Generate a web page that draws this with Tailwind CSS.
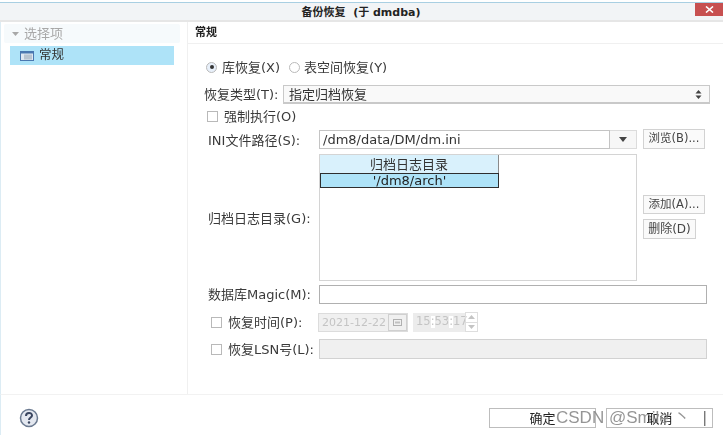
<!DOCTYPE html>
<html lang="zh">
<head>
<meta charset="utf-8">
<script src="https://cdn.jsdelivr.net/npm/@tailwindcss/browser@4"></script>
</head>
<body class="m-0 bg-white">
<div class="relative w-[723px] h-[435px] overflow-hidden bg-white flex flex-col text-[13px] leading-none text-[#3a3a3a] font-['DejaVu_Sans','Noto_Sans_CJK_SC',sans-serif]">
  <div class="flex flex-col flex-1 min-h-0 blur-[0.35px]">
    <!-- title bar -->
    <div class="mt-[2px] h-[20px] shrink-0 border-t border-t-[#a9cfe2] border-b-2 border-b-[#e6e6e6] bg-[#f2f4f6] flex justify-center items-center relative">
      <span class="font-bold text-[#222] text-[11px] ml-[-1px] mt-[1px] whitespace-pre">备份恢复  (于 dmdba)</span>
      <div class="absolute right-0 top-0 w-[28px] h-[13px] bg-[#c75050] flex items-center justify-center">
        <svg width="9" height="7" viewBox="0 0 9 7"><path d="M1 .5 8 6.500M8 .5 1 6.500" stroke="#fff" stroke-width="1.600"/></svg>
      </div>
    </div>
    <div class="flex flex-1 min-h-0 border-l border-l-[#dcecf4]">
      <!-- sidebar -->
      <div class="w-[187px] shrink-0 border-r border-r-[#f0f0f0] pl-[3px] pt-[2px]">
        <div class="w-[176px] h-[19px] bg-[#f6fafc] flex items-center pl-[8px] gap-[5px] text-[#a8a8a8] text-[13px] rounded-[2px]">
          <svg width="7" height="4" viewBox="0 0 7 4"><path d="M0 0h7L3.500 4z" fill="#a8a8a8"/></svg>
          <span>选择项</span>
        </div>
        <div class="mt-[3px] ml-[6px] w-[164px] h-[19px] bg-[#aee3f8] flex items-center pl-[10px] gap-[5px] text-[12.5px] text-[#333]">
          <svg width="14" height="10" viewBox="0 0 14 10"><rect x=".5" y=".5" width="13" height="9" fill="#dfe8f2" stroke="#4a78b0"/><rect x="1" y="1" width="12" height="1.500" fill="#4a78b0"/><rect x="4" y="3.500" width="8" height="5" fill="#b8c4d0"/></svg>
          <span>常规</span>
        </div>
      </div>
      <!-- main -->
      <div class="flex-1 min-w-0 flex flex-col">
        <div class="h-[22px] shrink-0 border-b border-b-[#f0f0f0] pl-[7px] pt-[5px] font-bold text-[#222] text-[11px]">常规</div>
        <div class="relative flex-1 flex flex-col">
          <!-- radios -->
          <div class="flex items-center h-[14px] mt-[16px] ml-[18px]">
            <span class="w-[11px] h-[11px] rounded-full border border-[#b9b9b9] bg-[#e8f0fa] flex items-center justify-center"><span class="w-[4px] h-[4px] rounded-full bg-[#333]"></span></span>
            <span class="ml-[5px] whitespace-nowrap">库恢复(X)</span>
            <span class="ml-[9px] w-[11px] h-[11px] rounded-full border border-[#b9b9b9] bg-white"></span>
            <span class="ml-[4px] whitespace-nowrap">表空间恢复(Y)</span>
          </div>
          <!-- select -->
          <div class="flex items-center mt-[11px] h-[19px] ml-[16px]">
            <span class="w-[79px] whitespace-nowrap">恢复类型(T):</span>
            <div class="w-[427px] h-[19px] border border-[#c9c9c9] border-b-2 bg-[#f9f9f9] flex items-center justify-between pl-[5px] pr-[7px]">
              <span class="text-[#333]">指定归档恢复</span>
              <svg width="7" height="11" viewBox="0 0 7 11"><path d="M3.500 1 6.500 4.500H.5zM3.500 10 .5 6.500h6z" fill="#444"/></svg>
            </div>
          </div>
          <!-- force -->
          <div class="flex items-center mt-[5px] h-[14px] ml-[19px]">
            <span class="w-[11px] h-[11px] border border-[#b9b9b9] bg-white"></span>
            <span class="ml-[6px] whitespace-nowrap">强制执行(O)</span>
          </div>
          <!-- ini -->
          <div class="flex mt-[7px] ml-[20px] h-[20px]">
            <span class="w-[111px] mt-[4px] whitespace-nowrap">INI文件路径(S):</span>
            <div class="w-[291px] h-[19px] border border-[#c4c4c4] bg-white flex items-center pl-[3px] text-[#333]">/dm8/data/DM/dm.ini</div>
            <div class="w-[27px] h-[19px] border border-l-0 border-[#dcdcdc] bg-[#f7f7f7] flex items-center justify-center">
              <svg width="8" height="5" viewBox="0 0 8 5"><path d="M0 0h8L4 5z" fill="#444"/></svg>
            </div>
            <button class="ml-[6px] -mt-[1px] w-[62px] h-[20px] border border-[#d2d2d2] bg-[#fafafa] text-[#444] text-[11.5px] whitespace-nowrap">浏览(B)...</button>
          </div>
          <!-- table -->
          <div class="flex mt-[4px] ml-[20px] h-[127px]">
            <span class="w-[111px] mt-[58px] whitespace-nowrap">归档日志目录(G):</span>
            <div class="w-[318px] h-[127px] border border-[#d4d4d4] bg-white">
              <div class="w-[179px] h-[18px] bg-[#d9f1fc] border-r border-r-[#8a8a8a] flex items-center justify-center text-[#333]">归档日志目录</div>
              <div class="w-[179px] h-[15px] bg-[#aee3f8] border border-[#2e2e2e] flex items-center justify-center text-[#222]">'/dm8/arch'</div>
            </div>
            <div class="ml-[6px] flex flex-col items-start">
              <button class="mt-[41px] w-[62px] h-[19px] border border-[#d2d2d2] bg-[#fafafa] text-[#444] text-[11.5px] whitespace-nowrap">添加(A)...</button>
              <button class="mt-[5px] w-[53px] h-[20px] border border-[#d2d2d2] bg-[#fafafa] text-[#444] text-[12px] whitespace-nowrap">删除(D)</button>
            </div>
          </div>
          <!-- magic -->
          <div class="flex items-center mt-[4px] ml-[20px] h-[19px]">
            <span class="w-[111px] whitespace-nowrap">数据库Magic(M):</span>
            <div class="w-[388px] h-[19px] border border-[#b0b0b0] bg-white"></div>
          </div>
          <!-- time -->
          <div class="flex items-center mt-[8px] ml-[23px] h-[20px]">
            <span class="w-[11px] h-[11px] border border-[#b9b9b9] bg-white"></span>
            <span class="ml-[6px] w-[90px] whitespace-nowrap">恢复时间(P):</span>
            <div class="w-[90px] h-[19px] border border-[#dcdcdc] bg-[#f0f0f0] flex items-center pl-[3px] justify-between text-[#c4c4c4] text-[11px] whitespace-nowrap">
              <span>2021-12-22</span>
              <span class="w-[19px] h-[17px] border border-[#d0d0d0] flex items-center justify-center"><svg width="9" height="7" viewBox="0 0 9 7"><rect x=".5" y=".5" width="8" height="6" fill="none" stroke="#b0b0b0"/><rect x="2" y="2.500" width="5" height="2" fill="#c0c0c0"/></svg></span>
            </div>
            <div class="ml-[5px] w-[52px] h-[19px] bg-[#ececec] flex items-center pl-[3px] text-[#c4c4c4] text-[11.5px]">15<span class="bg-white">:</span>53<span class="bg-white">:</span>17</div>
            <div class="w-[13px] h-[20px] flex flex-col border border-[#dedede]">
              <span class="flex-1 flex items-center justify-center border-b border-b-[#dedede]"><svg width="7" height="4" viewBox="0 0 7 4"><path d="M3.500 0 7 4H0z" fill="#c4c4c4"/></svg></span>
              <span class="flex-1 flex items-center justify-center"><svg width="7" height="4" viewBox="0 0 7 4"><path d="M0 0h7L3.500 4z" fill="#c4c4c4"/></svg></span>
            </div>
          </div>
          <!-- lsn -->
          <div class="flex items-center mt-[7px] ml-[23px] h-[20px]">
            <span class="w-[11px] h-[11px] border border-[#b9b9b9] bg-white"></span>
            <span class="ml-[6px] w-[91px] whitespace-nowrap">恢复LSN号(L):</span>
            <div class="w-[388px] h-[20px] border border-[#d2d2d2] bg-[#f0f0f0]"></div>
          </div>
        </div>
      </div>
    </div>
    <!-- footer -->
    <div class="h-[41px] shrink-0 border-t border-t-[#f2f2f2] border-l border-l-[#dcecf4] flex items-center pl-[18px] pr-[10px]">
      <svg width="20" height="20" viewBox="0 0 20 20" class="mt-[6px]">
        <circle cx="10" cy="10" r="8.500" fill="#e4e8f0" stroke="#6b7a90" stroke-width="1.500"/>
        <path d="M7 8c0-4 6-4 6-.5 0 2-3 2-3 4.500" fill="none" stroke="#3a4660" stroke-width="2"/>
        <circle cx="10" cy="14.500" r="1.200" fill="#3a4660"/>
      </svg>
      <div class="ml-auto flex gap-[10px] mt-[6px]">
        <button class="w-[107px] h-[20px] border border-[#bdbdbd] bg-white text-[#222] text-[13px]">确定</button>
        <button class="w-[107px] h-[20px] border border-[#bdbdbd] bg-white text-[#222] text-[13px]">取消</button>
      </div>
    </div>
  </div>
  <!-- watermark -->
  <div class="absolute left-[556px] top-[408px] text-[17px] leading-[20px] text-[#8a8a8a]/90 whitespace-nowrap font-['Liberation_Sans','Noto_Sans_CJK_SC',sans-serif]">CSDN @Smile 丶<span class="ml-[12px] text-[#777]">|</span></div>
</div>
</body>
</html>
